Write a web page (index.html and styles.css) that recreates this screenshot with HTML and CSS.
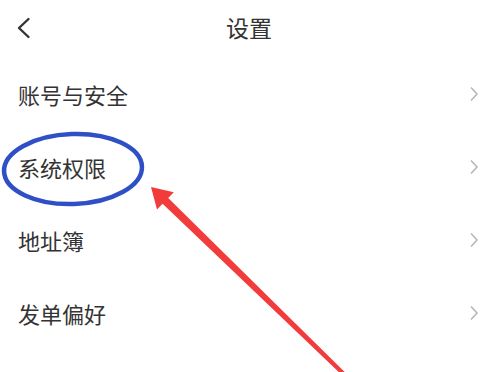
FILE: index.html
```html
<!DOCTYPE html>
<html lang="zh-CN">
<head>
    <meta charset="UTF-8">
    <title>设置</title>
    <link rel="stylesheet" href="styles.css">
</head>
<body>
    <div class="page">
        <div class="header">
            <svg class="back" width="14" height="22" viewBox="0 0 14 22">
                <polyline points="11.5,2 2,11 11.5,20" fill="none" stroke="#333" stroke-width="2.4" stroke-linecap="round" stroke-linejoin="round"/>
            </svg>
            <div class="title">设置</div>
        </div>

        <ul class="menu">
            <li class="item"><span>账号与安全</span><svg class="arrow" width="10" height="16" viewBox="0 0 10 16"><polyline points="2,1.5 8,8 2,14.5" fill="none" stroke="#b5b5b5" stroke-width="1.5"/></svg></li>
            <li class="item"><span>系统权限</span><svg class="arrow" width="10" height="16" viewBox="0 0 10 16"><polyline points="2,1.5 8,8 2,14.5" fill="none" stroke="#b5b5b5" stroke-width="1.5"/></svg></li>
            <li class="item"><span>地址簿</span><svg class="arrow" width="10" height="16" viewBox="0 0 10 16"><polyline points="2,1.5 8,8 2,14.5" fill="none" stroke="#b5b5b5" stroke-width="1.5"/></svg></li>
            <li class="item"><span>发单偏好</span><svg class="arrow" width="10" height="16" viewBox="0 0 10 16"><polyline points="2,1.5 8,8 2,14.5" fill="none" stroke="#b5b5b5" stroke-width="1.5"/></svg></li>
        </ul>

        <!-- annotation drawn over the screenshot -->
        <svg class="marks" width="486" height="372" viewBox="0 0 486 372">
            <ellipse cx="73" cy="169" rx="69" ry="35" fill="none" stroke="#2f4fc6" stroke-width="4.5" transform="rotate(-2 73 169)"/>
            <polygon points="151,187 173.8,192.3 168.2,198 352.4,379.6 349.6,382.4 162.6,203.8 157,209.5" fill="#f23b3b"/>
        </svg>
    </div>
</body>
</html>
```

FILE: styles.css
```css
body {
    margin: 0;
    background-color: #fff;
    font-family: "Noto Sans CJK SC", "Noto Sans", sans-serif;
    color: #333;
}
.page {
    position: relative;
    width: 486px;
    height: 372px;
    overflow: hidden;
}
.header {
    position: relative;
    height: 53px;
    display: flex;
    align-items: center;
    justify-content: center;
}
.back {
    position: absolute;
    left: 17px;
    top: 17px;
}
.title {
    font-size: 23px;
    margin-left: 12px;
    color: #333;
}
.menu {
    list-style: none;
    margin: 4px 0 0;
    padding: 0;
}
.item {
    height: 73px;
    display: flex;
    align-items: center;
    justify-content: space-between;
    padding: 0 7px 0 18px;
    font-size: 22px;
    color: #333;
}
.marks {
    position: absolute;
    left: 0;
    top: 0;
}
```
